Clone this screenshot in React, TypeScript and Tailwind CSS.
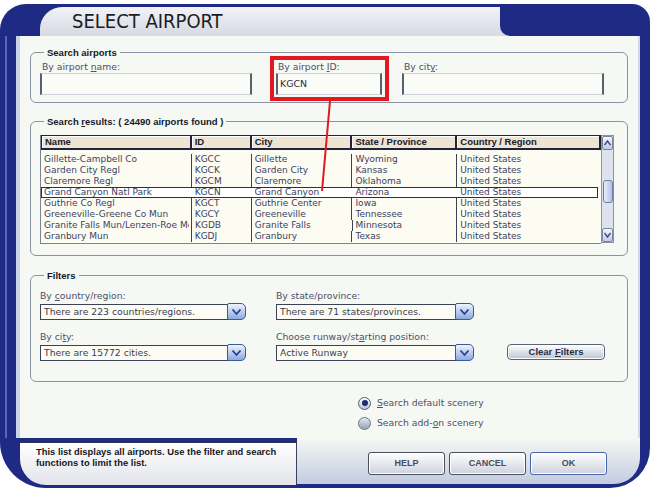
import React from "react";

const reg = "font-['DejaVu_Sans',sans-serif]";
const bold = "font-['Liberation_Sans',Arial,sans-serif] font-bold";

const cols = [
  { label: "Name", w: "w-[151px]" },
  { label: "ID", w: "w-[60px]" },
  { label: "City", w: "w-[101px]" },
  { label: "State / Province", w: "w-[105px]" },
  { label: "Country / Region", w: "w-[144px]" },
];

const rows = [
  ["Gillette-Campbell Co", "KGCC", "Gillette", "Wyoming", "United States"],
  ["Garden City Regl", "KGCK", "Garden City", "Kansas", "United States"],
  ["Claremore Regl", "KGCM", "Claremore", "Oklahoma", "United States"],
  ["Grand Canyon Natl Park", "KGCN", "Grand Canyon", "Arizona", "United States"],
  ["Guthrie Co Regl", "KGCT", "Guthrie Center", "Iowa", "United States"],
  ["Greeneville-Greene Co Mun", "KGCY", "Greeneville", "Tennessee", "United States"],
  ["Granite Falls Mun/Lenzen-Roe Meml", "KGDB", "Granite Falls", "Minnesota", "United States"],
  ["Granbury Mun", "KGDJ", "Granbury", "Texas", "United States"],
];

function Legend({ children }: { children: React.ReactNode }) {
  return (
    <legend className={`ml-[4px] px-[3px] text-[9.5px] leading-[11px] text-[#15182a] ${bold}`}>
      {children}
    </legend>
  );
}

function TextField({ label, value, width, className = "" }: { label: React.ReactNode; value?: string; width: string; className?: string }) {
  return (
    <div className={`flex flex-col ${width} ${className}`}>
      <div className={`pl-[2px] h-[12px] leading-[12px] text-[9.25px] text-[#4c5068] ${reg}`}>{label}</div>
      <div className={`h-[22px] bg-[#fbfcf7] border-x-2 border-x-[#5a606e] border-y border-y-[#cfd3dc] pl-[2px] flex items-center text-[9.4px] text-[#2a2e40] ${reg}`}>
        {value}
      </div>
    </div>
  );
}

function Chevron() {
  return (
    <svg width="11" height="8" viewBox="0 0 11 8">
      <path d="M1.5 1.5 L5.5 6 L9.5 1.5" fill="none" stroke="#23408f" strokeWidth="1.8" />
    </svg>
  );
}

function Select({ label, value, width }: { label: React.ReactNode; value: string; width: string }) {
  return (
    <div className={`flex flex-col ${width}`}>
      <div className={`h-[12px] leading-[12px] text-[9.25px] text-[#4c5068] ${reg}`}>{label}</div>
      <div className="flex items-center mt-[1px] h-[17px]">
        <div className={`flex-1 h-[16px] border border-[#3a4256] bg-[#fcfcf5] pl-[3px] leading-[14px] text-[9.25px] text-[#3a3e50] whitespace-nowrap overflow-hidden ${reg}`}>
          {value}
        </div>
        <div className="w-[19px] h-[17px] -ml-[2px] rounded-r-[5px] rounded-l-[2px] border border-[#3a5a9c] bg-linear-to-b from-[#eef4fc] to-[#8eaadc] flex items-center justify-center">
          <Chevron />
        </div>
      </div>
    </div>
  );
}

function Radio({ checked, children }: { checked?: boolean; children: React.ReactNode }) {
  return (
    <div className="flex items-center h-[20px]">
      <div
        className={`w-[13px] h-[13px] rounded-full border flex items-center justify-center ${
          checked ? "border-[#56607a] bg-linear-to-b from-white to-[#b9c1d2]" : "border-[#6a7488] bg-linear-to-b from-[#e4e8ef] to-[#98a2b6]"
        }`}
      >
        {checked && <div className="w-[6px] h-[6px] rounded-full bg-[#1b2d6c]" />}
      </div>
      <span className={`ml-[6px] text-[9.25px] text-[#4c5068] ${reg}`}>{children}</span>
    </div>
  );
}

function Button({ children, ok }: { children: React.ReactNode; ok?: boolean }) {
  return (
    <div
      className={`w-[77px] h-[23px] rounded-[3px] border ${
        ok ? "border-[#4a64a8]" : "border-[#4a4f5e]"
      } bg-linear-to-b from-white to-[#cdd2dd] flex items-center justify-center text-[9px] text-[#4a4d58] ${bold} shadow-[inset_0_0_0_1px_#ffffff]`}
    >
      {children}
    </div>
  );
}

function Arrow({ up }: { up?: boolean }) {
  return (
    <div className="h-[14px] border border-[#7a84a0] rounded-[2px] bg-linear-to-b from-[#f4f6fb] to-[#c2cbe0] flex items-center justify-center">
      <svg width="7" height="6" viewBox="0 0 7 6">
        <path d={up ? "M0.5 5 L3.5 1 L6.5 5" : "M0.5 1 L3.5 5 L6.5 1"} fill="none" stroke="#34488c" strokeWidth="1.4" />
      </svg>
    </div>
  );
}

function Results() {
  return (
    <div className="flex">
      <div className="w-[561px] border-l border-b border-[#7a8296] bg-[#fdfcf3]">
        <div className="flex h-[15px]">
          {cols.map((c, i) => (
            <div
              key={c.label}
              className={`${c.w} h-full bg-[#efe3d1] border-t border-b-2 border-r-2 border-[#1f2438] ${i === 0 ? "border-l" : ""} pl-[3px] leading-[12px] text-[9.5px] text-[#151a2c] ${bold} shadow-[inset_1px_1px_0_#ffffff]`}
            >
              {c.label}
            </div>
          ))}
        </div>
        <div className="pt-[4px] pb-[1px]">
          {rows.map((r, ri) => {
            const sel = ri === 3;
            return (
              <div
                key={r[1]}
                className={`flex h-[11px] ${sel ? "bg-white outline outline-[#2a3046] -outline-offset-1 mr-[3px]" : ""}`}
              >
                {r.map((cell, ci) => (
                  <div
                    key={ci}
                    className={`${cols[ci].w} ${sel && ci === 4 ? "!w-[141px]" : ""} h-full pl-[3px] pr-[2px] ${
                      sel || ci === 4 ? "" : "border-r border-[#3a4256]"
                    } ${sel && ci < 4 ? "border-r border-transparent" : ""} leading-[11px] text-[9px] text-[#3a4262] ${reg}`}
                  >
                    <div className="overflow-hidden whitespace-nowrap">{cell}</div>
                  </div>
                ))}
              </div>
            );
          })}
        </div>
      </div>
      <div className="w-[13px] h-[108px] flex flex-col bg-[#dde2ec] border border-[#8a92a6]">
        <Arrow up />
        <div className="flex-1 relative">
          <div className="absolute left-[1px] right-[0px] top-[30px] h-[23px] rounded-[3px] border border-[#6a7aa8] bg-linear-to-r from-[#e8eefa] to-[#b4c2e4]" />
        </div>
        <Arrow />
      </div>
    </div>
  );
}

function Header() {
  return (
    <div className="flex h-[32px] shrink-0">
      <div className="w-[40px]" />
      <div className="flex-1 mt-[3px] flex bg-linear-to-b from-[#f1f3f7] to-[#d5d9e3] rounded-tl-[22px]">
        <div className="flex-1 pl-[32px] leading-[29px] text-[20px] text-[#1c1c22] font-['DejaVu_Sans_Condensed','Liberation_Sans',sans-serif]">
          SELECT AIRPORT
        </div>
        <div className="w-[150px] bg-[#1e2a84] rounded-bl-[10px]" />
      </div>
    </div>
  );
}

function Panel() {
  return (
    <div className="flex-1 flex flex-col bg-[#f5f8f3] border-l-4 border-l-[#cbd3ea] border-r-2 border-r-[#d3d9e8] pl-[10px] pr-[10px]">
      <fieldset className="mt-[11px] border border-[#8a92a6] rounded-[6px] px-[9px] pb-[7px]">
        <Legend>Search airports</Legend>
        <div className="flex mt-[3px]">
          <TextField label={<>By airport <u>n</u>ame:</>} width="w-[212px]" />
          <TextField label={<>By airport <u>I</u>D:</>} value="KGCN" width="w-[106px]" className="ml-[24px]" />
          <TextField label={<>By cit<u>y</u>:</>} width="w-[202px]" className="ml-[20px]" />
        </div>
      </fieldset>

      <fieldset className="mt-[13px] border border-[#8a92a6] rounded-[6px] px-[9px] pb-[11px]">
        <Legend>Search <u>r</u>esults: ( 24490 airports found )</Legend>
        <div className="mt-[8px]">
          <Results />
        </div>
      </fieldset>

      <fieldset className="mt-[14px] border border-[#8a92a6] rounded-[6px] px-[9px] pb-[20px]">
        <Legend>Filters</Legend>
        <div className="flex mt-[9px]">
          <div className="flex flex-col gap-[11px] w-[206px]">
            <Select label={<>By <u>c</u>ountry/region:</>} value="There are 223 countries/regions." width="w-[206px]" />
            <Select label={<>By ci<u>t</u>y:</>} value="There are 15772 cities." width="w-[206px]" />
          </div>
          <div className="flex flex-col gap-[11px] w-[198px] ml-[30px]">
            <Select label={<>By state/province:</>} value="There are 71 states/provinces." width="w-[198px]" />
            <Select label={<>Choose runway/st<u>a</u>rting position:</>} value="Active Runway" width="w-[198px]" />
          </div>
          <div className="self-end ml-[33px] mb-[1px] w-[98px] h-[16px] rounded-[4px] border border-[#5a6278] bg-linear-to-b from-white to-[#bcc4d6] shadow-[inset_0_0_0_1px_#ffffff] flex items-center justify-center">
            <span className={`text-[9.5px] text-[#2a2e3c] ${bold}`}>
              Clear <u>F</u>ilters
            </span>
          </div>
        </div>
      </fieldset>

      <div className="mt-[11px] ml-[328px] flex flex-col">
        <Radio checked>
          <u>S</u>earch default scenery
        </Radio>
        <Radio>
          Search add-<u>o</u>n scenery
        </Radio>
      </div>
    </div>
  );
}

function LeftEdge() {
  return (
    <div className="w-[16px] flex">
      <div className="w-[5px]" />
      <div className="w-[2px] bg-[#5866bc]" />
    </div>
  );
}

function Footer() {
  return (
    <div className="flex h-[50px] shrink-0">
      <div className="w-[297px] pt-[3px] pb-[3px] pl-[20px]">
        <div className="h-full bg-linear-to-b from-white to-[#e2e4ea] border-t-2 border-t-[#2a3050] border-r border-r-[#3a4060] rounded-bl-[26px] pl-[16px] pt-[3px]">
          <p className={`text-[9.4px] leading-[11px] text-[#16161c] ${bold}`}>
            This list displays all airports. Use the filter and search
            <br />
            functions to limit the list.
          </p>
        </div>
      </div>
      <div className="flex-1 mb-[4px] rounded-br-[26px] bg-linear-to-b from-[#f5f8f3] to-[#c4cbe0] pt-[14px] pl-[71px] flex gap-[4px]">
        <Button>HELP</Button>
        <Button>CANCEL</Button>
        <Button ok>OK</Button>
      </div>
      <div className="w-[10px]" />
    </div>
  );
}

export default function App() {
  return (
    <div className="relative w-[650px] h-[488px] bg-white overflow-hidden">
      <div className="mt-[4px] h-[484px] flex flex-col bg-[#1e2a84] rounded-tl-[26px] rounded-tr-[18px] rounded-bl-[46px] rounded-br-[40px] overflow-hidden">
        <Header />
        <div className="flex h-[402px]">
          <LeftEdge />
          <Panel />
          <div className="w-[10px]" />
        </div>
        <Footer />
      </div>
      <div className="absolute left-[270px] top-[56px] w-[119px] h-[45px] border-4 border-[#e11822]" />
      <svg className="absolute left-0 top-0 pointer-events-none" width="650" height="488">
        <line x1="330" y1="101" x2="322" y2="191" stroke="#e11822" strokeWidth="2" />
      </svg>
    </div>
  );
}
